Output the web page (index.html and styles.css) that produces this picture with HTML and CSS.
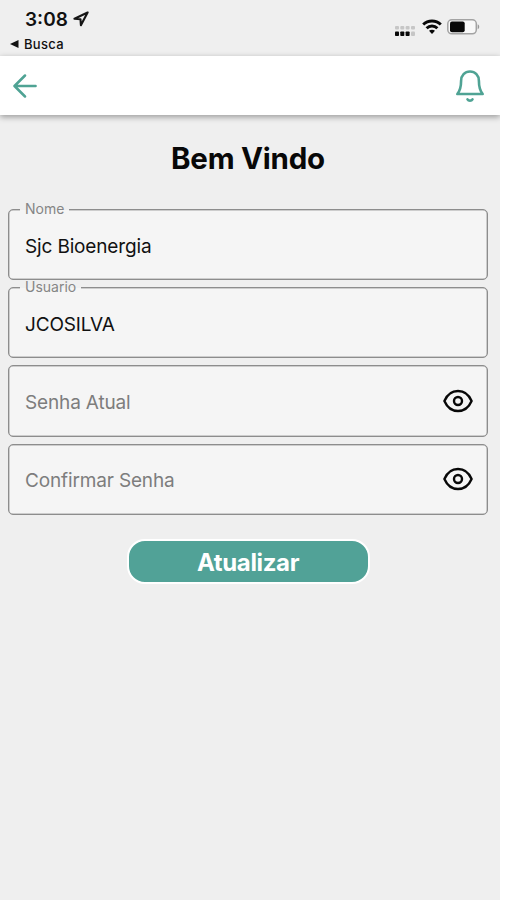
FILE: index.html
```html
<!DOCTYPE html>
<html lang="pt-BR">
<head>
<meta charset="utf-8">
<title>Bem Vindo</title>
<link rel="stylesheet" href="styles.css">
</head>
<body>
<div class="screen">
  <header class="status">
    <div class="status-left">
      <div class="clock"><span class="time">3:08</span>
        <svg class="location" width="16" height="16" viewBox="0 0 16 16"><path d="M14.600 1.500 1.500 7.700l6 .6.4 6z" fill="none" stroke="#151515" stroke-width="2.100" stroke-linejoin="round"/></svg>
      </div>
      <div class="back-app"><svg width="9" height="8" viewBox="0 0 9 8"><path d="M0 4 8.5 0v8z" fill="#111"/></svg><span>Busca</span></div>
    </div>
    <div class="status-right">
      <svg width="22" height="12" viewBox="0 0 22 12"><g fill="#c6c6c6"><rect x="1" y="0" width="4" height="3.500" rx="1"/><rect x="6.3" y="0" width="4" height="3.500" rx="1"/><rect x="11.6" y="0" width="4" height="3.500" rx="1"/><rect x="17" y="0" width="4" height="3.500" rx="1"/><rect x="17" y="5.500" width="4" height="4.500" rx="1"/></g><g fill="#080808"><rect x="1" y="5.500" width="4" height="4.600" rx=".8"/><rect x="6.3" y="5.500" width="4" height="4.600" rx=".8"/><rect x="11.6" y="5.500" width="4" height="4.600" rx=".8"/></g></svg>
      <svg class="wifi" width="20" height="16" viewBox="0 0 20 16"><g fill="none" stroke="#080808" stroke-width="2.900"><path d="M1.2 5.5C6 .8 14 .8 18.800 5.500"/><path d="M4.600 9.200c3-3 7.800-3 10.800 0"/></g><path d="M7 11.800c1.800-1.500 4.200-1.500 6 0l-3 3.100z" fill="#080808"/></svg>
      <svg class="battery" width="34" height="16" viewBox="0 0 34 16"><rect x=".8" y=".8" width="28.500" height="14" rx="4" fill="#f8f8f8" stroke="#a3a3a3" stroke-width="1.5"/><rect x="3" y="2.500" width="14.700" height="10.800" rx="2" fill="#080808"/><path d="M30.700 5.300c2 .8 2 4.200 0 5z" fill="#999"/></svg>
    </div>
  </header>
  <nav class="appbar">
    <svg width="24" height="24" viewBox="0 0 24 24"><path d="M22.6 12H1.6M12 1.5 1.5 12 12 22.5" fill="none" stroke="#4fa394" stroke-width="2.5" stroke-linecap="round" stroke-linejoin="round"/></svg>
    <svg width="30" height="34" viewBox="0 0 30 34"><g fill="none" stroke="#4fa394" stroke-width="2.6" stroke-linejoin="round" stroke-linecap="round"><path d="M2.3 25h25.4c-2.8-3.2-3.8-6.6-3.8-13.2C23.900 6.300 20.200 2.500 15 2.500S6.100 6.300 6.100 11.800C6.100 18.400 5.100 21.800 2.300 25z"/><path d="M12.500 30.300c1 1.700 4 1.700 5 0"/></g></svg>
  </nav>
  <main class="content">
    <h1>Bem Vindo</h1>
    <form class="fields">
      <div class="field"><label class="label">Nome</label><span class="value">Sjc Bioenergia</span></div>
      <div class="field"><label class="label">Usuario</label><span class="value">JCOSILVA</span></div>
      <div class="field"><span class="hint">Senha Atual</span>
        <svg class="eye" width="30" height="24" viewBox="0 0 30 24"><g fill="none" stroke="#080808" stroke-width="2.4" stroke-linejoin="round"><path d="M1.400 12C4.300 5.300 9.300 2 15 2s10.700 3.300 13.600 10C25.700 18.700 20.700 22 15 22S4.300 18.700 1.400 12z"/><circle cx="15" cy="12" r="4"/></g></svg></div>
      <div class="field"><span class="hint">Confirmar Senha</span>
        <svg class="eye" width="30" height="24" viewBox="0 0 30 24"><g fill="none" stroke="#080808" stroke-width="2.4" stroke-linejoin="round"><path d="M1.400 12C4.300 5.300 9.300 2 15 2s10.700 3.300 13.600 10C25.700 18.700 20.700 22 15 22S4.300 18.700 1.400 12z"/><circle cx="15" cy="12" r="4"/></g></svg></div>
      <button class="submit" type="button">Atualizar</button>
    </form>
  </main>
</div>
</body>
</html>
```

FILE: styles.css
```css
* { box-sizing: border-box; }
body { margin: 0; background: #fff; font-family: Inter, "Liberation Sans", sans-serif; color: #111; }
svg { display: block; flex: none; }
.screen { width: 500px; height: 900px; background: #efefef; overflow: hidden; }
.status { height: 56px; display: flex; justify-content: space-between; padding: 8px 19px 0 10px; }
.clock { display: flex; align-items: center; height: 22px; padding-left: 15px; gap: 5px; }
.time { font-size: 19px; font-weight: 600; letter-spacing: 0; }
.back-app { display: flex; align-items: center; gap: 5px; height: 16px; margin-top: 6px; font-size: 13px; font-weight: 500; letter-spacing: .3px; }
.status-right { display: flex; align-items: center; height: 16px; margin-top: 11px; }
.status-right svg:first-child { margin-top: 10px; }
.wifi { margin-left: 6px; }
.battery { margin-left: 5px; }
.appbar { height: 59px; background: #fff; box-shadow: 0 2px 6px rgba(0, 0, 0, .36); display: flex; align-items: center; justify-content: space-between; padding: 0 15px 0 13px; }
.content { padding: 0 12px 0 8px; }
h1 { margin: 24px 0 0; height: 38px; line-height: 38px; text-align: center; font-size: 29.500px; font-weight: 700; letter-spacing: -.25px; color: #080808; }
.fields { display: flex; flex-direction: column; gap: 7px; margin-top: 32px; }
.field { position: relative; height: 71.200px; border: 1px solid #8d8d8d; box-shadow: inset 0 0 0 .5px #a5a5a5; border-radius: 5px; background: #f5f5f5; display: flex; align-items: center; justify-content: space-between; padding: 4px 14px 0 16px; }
.label { position: absolute; left: 11px; top: -8px; height: 14px; padding: 0 5px; line-height: 14px; font-size: 14px; color: #858585; background: linear-gradient(#efefef 55%, #f5f5f5 55%); }
.value, .hint { font-size: 19px; line-height: 24px; letter-spacing: -.15px; }
.hint { color: #7d7d7d; }
.eye { margin-top: -4px; }
.submit { align-self: center; width: 243px; height: 45px; margin-top: 17px; padding: 2px 0 0; border: 2px solid #fff; border-radius: 18px; background: #51a297; color: #fff; font-family: inherit; font-size: 24px; font-weight: 700; line-height: 40px; letter-spacing: -.35px; }
```
